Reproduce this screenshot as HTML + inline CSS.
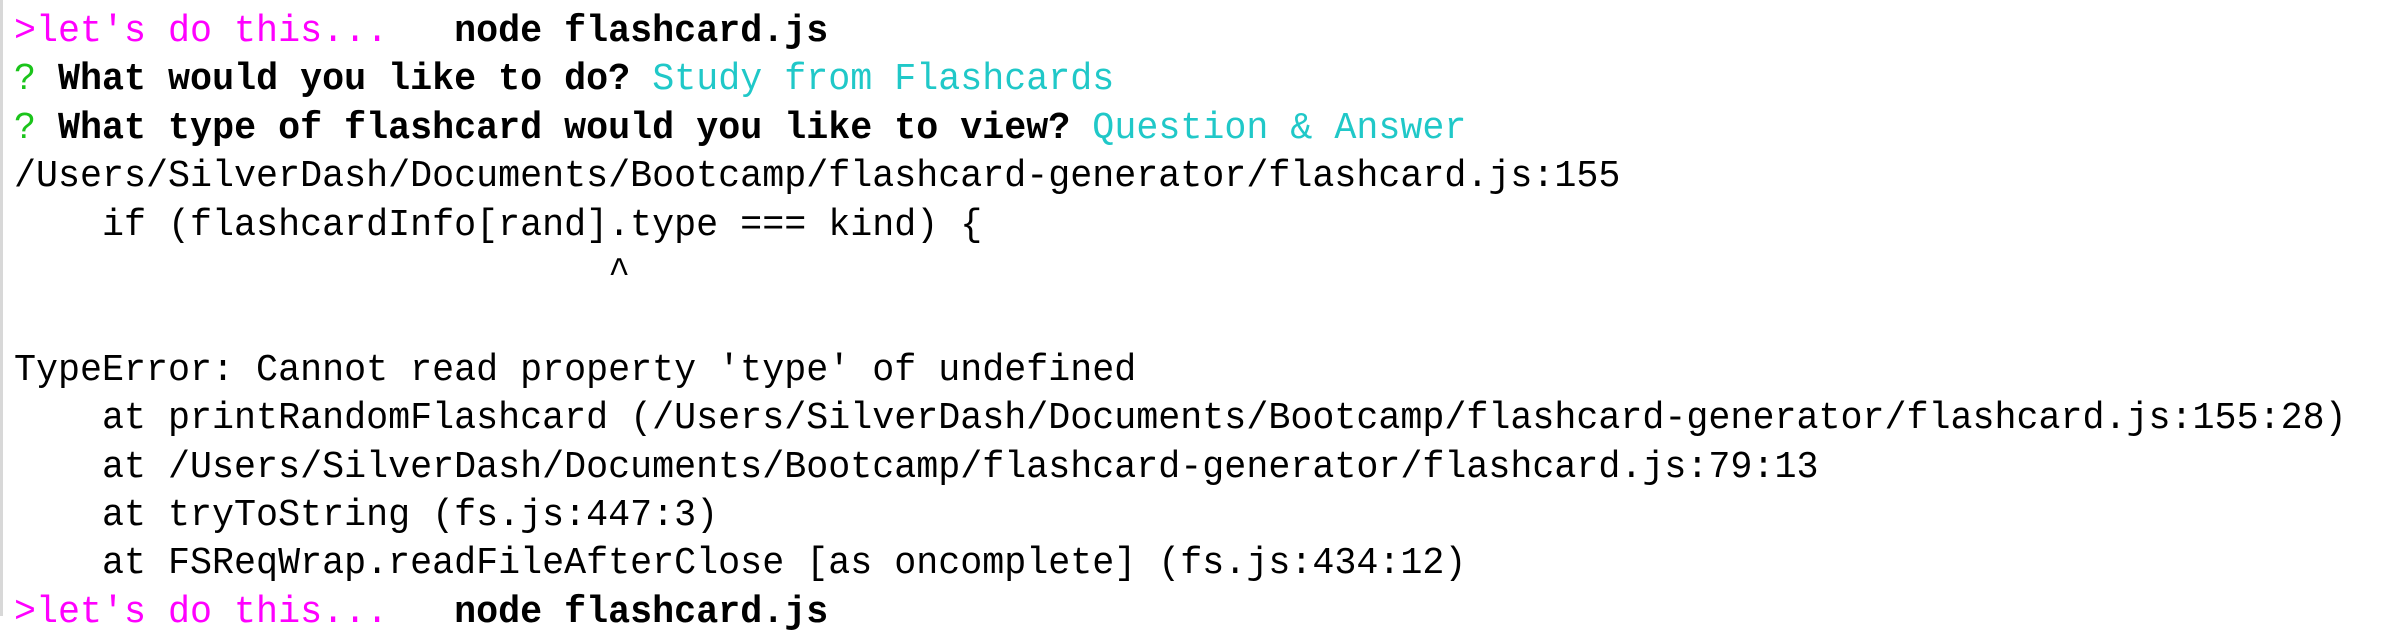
<!DOCTYPE html>
<html><head><meta charset="utf-8"><style>
html,body{margin:0;padding:0;background:#fff;width:2386px;height:616px;overflow:hidden}
.term{position:absolute;left:0;top:0;width:2386px;height:616px;border-left:3px solid #d8d8d8;box-sizing:border-box}
pre{margin:0;position:absolute;left:11px;top:8px;font-family:"Liberation Mono","DejaVu Sans Mono",monospace;font-size:38px;letter-spacing:0;line-height:48.4px;color:#000;white-space:pre;transform:scaleX(0.965);transform-origin:0 0}
.m{color:#f0f}.g{color:#1bc41b}.c{color:#20c8c8}b{font-weight:bold}
</style></head><body><div class="term"><pre><span class="m">&gt;let's do this...</span>   <b>node flashcard.js</b>
<span class="g">?</span> <b>What would you like to do?</b> <span class="c">Study from Flashcards</span>
<span class="g">?</span> <b>What type of flashcard would you like to view?</b> <span class="c">Question &amp; Answer</span>
/Users/SilverDash/Documents/Bootcamp/flashcard-generator/flashcard.js:155
    if (flashcardInfo[rand].type === kind) {
                           ^

TypeError: Cannot read property 'type' of undefined
    at printRandomFlashcard (/Users/SilverDash/Documents/Bootcamp/flashcard-generator/flashcard.js:155:28)
    at /Users/SilverDash/Documents/Bootcamp/flashcard-generator/flashcard.js:79:13
    at tryToString (fs.js:447:3)
    at FSReqWrap.readFileAfterClose [as oncomplete] (fs.js:434:12)
<span class="m">&gt;let's do this...</span>   <b>node flashcard.js</b></pre></div></body></html>
